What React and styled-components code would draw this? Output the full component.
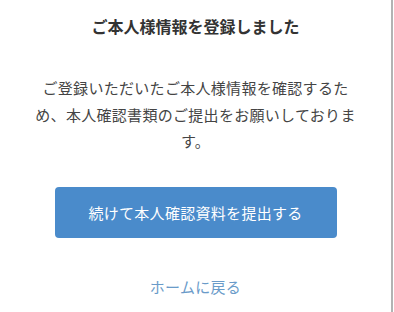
import styled, { createGlobalStyle } from "styled-components";

const GlobalStyle = createGlobalStyle`
  html, body {
    margin: 0;
    padding: 0;
    background: #fff;
  }
  body {
    font-family: "Noto Sans CJK JP", "Noto Sans", sans-serif;
  }
`;

const Page = styled.div`
  width: 393px;
  height: 312px;
  box-sizing: border-box;
  border-right: 2px solid #b3b3b3;
  display: flex;
  flex-direction: column;
  align-items: center;
  padding-top: 14px;
`;

const Title = styled.h1`
  margin: 0;
  font-size: 16px;
  line-height: 24px;
  font-weight: 700;
  color: #333;
`;

const Message = styled.p`
  margin: 37px 0 0;
  width: 330px;
  font-size: 15px;
  line-height: 26.5px;
  letter-spacing: 0.3px;
  color: #444;
  text-align: center;
`;

const PrimaryButton = styled.button`
  margin-top: 32px;
  width: 282px;
  height: 51px;
  border: none;
  border-radius: 4px;
  background: #4a8bcb;
  color: #fff;
  font-family: inherit;
  font-size: 15px;
  letter-spacing: 0.3px;
  cursor: pointer;
`;

const HomeLink = styled.a`
  margin-top: 37px;
  font-size: 15px;
  line-height: 24px;
  letter-spacing: 0.3px;
  color: #6a9bc9;
  text-decoration: none;
  cursor: pointer;
`;

export default function App() {
  return (
    <>
      <GlobalStyle />
      <Page>
        <Title>ご本人様情報を登録しました</Title>
        <Message>
          ご登録いただいたご本人様情報を確認するため、本人確認書類のご提出をお願いしております。
        </Message>
        <PrimaryButton>続けて本人確認資料を提出する</PrimaryButton>
        <HomeLink>ホームに戻る</HomeLink>
      </Page>
    </>
  );
}
